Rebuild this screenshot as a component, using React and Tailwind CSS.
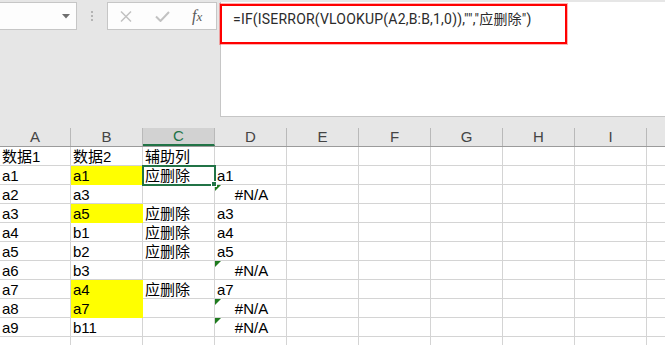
import React from 'react';

const cols = ['A', 'B', 'C', 'D', 'E', 'F', 'G', 'H', 'I', ''];

// each row: [A, B, C, D], yellow = B filled
const rows = [
  { cells: ['数据1', '数据2', '辅助列', ''] },
  { cells: ['a1', 'a1', '应删除', 'a1'], yellow: true, selected: true },
  { cells: ['a2', 'a3', '', '#N/A'] },
  { cells: ['a3', 'a5', '应删除', 'a3'], yellow: true },
  { cells: ['a4', 'b1', '应删除', 'a4'] },
  { cells: ['a5', 'b2', '应删除', 'a5'] },
  { cells: ['a6', 'b3', '', '#N/A'] },
  { cells: ['a7', 'a4', '应删除', 'a7'], yellow: true },
  { cells: ['a8', 'a7', '', '#N/A'], yellow: true },
  { cells: ['a9', 'b11', '', '#N/A'] },
  { cells: ['', '', '', ''] },
];

const ErrorMark = () => (
  <svg className="absolute left-0 top-0" width="6" height="6" viewBox="0 0 6 6">
    <path d="M0 0H6L0 6Z" fill="#1e7b1e" />
  </svg>
);

const Cell = ({ idx, value, yellow, selected }) => {
  const width = idx === 0 ? 'w-[71px]' : 'w-[72px]';
  const isError = value === '#N/A';
  const fill = yellow ? 'bg-[#ffff00] border-[#ffff00]' : 'border-[#d4d4d4]';
  return (
    <div className={`relative shrink-0 h-[19px] ${width} border-r border-b ${fill} pl-[2px] pt-[1px] leading-[18px] whitespace-nowrap ${isError ? 'text-center pl-0' : ''}`}>
      {isError && <ErrorMark />}
      {value}
      {selected && (
        <div className="absolute -left-[1px] -top-[1px] w-[74px] h-[21px] border-2 border-[#217346] z-10">
          <div className="absolute -right-[3px] -bottom-[3px] w-[6px] h-[6px] bg-[#217346] border border-white" />
        </div>
      )}
    </div>
  );
};

export default function App() {
  return (
    <div className="w-[665px] h-[345px] overflow-hidden bg-[#e6e6e6] font-['Liberation_Sans','Noto_Sans_CJK_SC',sans-serif] text-black">
      {/* Formula toolbar */}
      <div className="flex h-[117px]">
        <div className="w-[220px] shrink-0 flex items-start pt-[2px]">
          {/* Name box */}
          <div className="-ml-[1px] w-[78px] h-[28px] bg-[#fdfdfd] border border-[#c6c6c6] flex items-center justify-end pr-[6px]">
            <svg width="8" height="5" viewBox="0 0 8 5">
              <path d="M0 0H8L4 4.5Z" fill="#6f6f6f" />
            </svg>
          </div>
          <div className="w-[30px] h-[28px] flex flex-col items-center justify-center gap-[2px]">
            <span className="w-[2px] h-[2px] bg-[#b4b4b4]" />
            <span className="w-[2px] h-[2px] bg-[#b4b4b4]" />
            <span className="w-[2px] h-[2px] bg-[#b4b4b4]" />
          </div>
          {/* Cancel / enter / fx */}
          <div className="w-[110px] h-[28px] bg-[#fdfdfd] border border-[#c6c6c6] flex items-center">
            <svg className="ml-[12px]" width="12" height="11" viewBox="0 0 12 11">
              <path d="M1 0.5L11 10.5M11 0.5L1 10.5" stroke="#c2c2c2" strokeWidth="1.5" />
            </svg>
            <svg className="ml-[23px]" width="15" height="11" viewBox="0 0 15 11">
              <path d="M1 5.5L5.5 10L14 1" stroke="#c2c2c2" strokeWidth="2" fill="none" />
            </svg>
            <span className="ml-[22px] font-['Liberation_Serif',serif] italic text-[16px] text-[#5a5a5a] leading-none">
              f<span className="text-[13px]">x</span>
            </span>
          </div>
        </div>
        {/* Formula bar */}
        <div className="flex-1 mt-[2px] h-[115px] bg-white border-l border-b border-[#c6c6c6]">
          <div className="-ml-[1px] mt-[2px] w-[347px] h-[40px] border-2 border-[#ff0000] shadow-[0_0_0_1px_rgba(255,0,0,0.3)] pl-[11px] pt-[1px]">
            <span className="font-['Roboto','Noto_Sans_CJK_SC',sans-serif] text-[14px] leading-[18px] tracking-[0.2px] text-[#2b2b2b] whitespace-nowrap">
              {'=IF(ISERROR(VLOOKUP(A2,B:B,1,0)),"","'}
              <span className="font-['Noto_Sans_CJK_SC',sans-serif] text-[14px]">应删除</span>
              {'")'}
            </span>
          </div>
        </div>
      </div>

      <div className="h-[11px]" />

      {/* Column headers */}
      <div className="flex h-[19px] border-b border-[#9b9b9b] text-[15px]">
        {cols.map((c, i) => (
          <div
            key={i}
            className={`shrink-0 ${i === 0 ? 'w-[71px]' : 'w-[72px]'} border-r border-[#b9b9b9] flex items-center justify-center leading-[18px] ${
              c === 'C' ? 'bg-[#d2d2d2] border-b-2 border-b-[#217346] text-[#217346]' : 'text-[#444444]'
            }`}
          >
            {c}
          </div>
        ))}
      </div>

      {/* Data grid */}
      <div className="text-[15px] bg-white">
        {rows.map((r, ri) => (
          <div key={ri} className="flex">
            <Cell idx={0} value={r.cells[0]} />
            <Cell idx={1} value={r.cells[1]} yellow={r.yellow} />
            <Cell idx={2} value={r.cells[2]} selected={r.selected} />
            <Cell idx={3} value={r.cells[3]} />
            {[4, 5, 6, 7, 8, 9].map((k) => (
              <Cell key={k} idx={k} value="" />
            ))}
          </div>
        ))}
      </div>
    </div>
  );
}
